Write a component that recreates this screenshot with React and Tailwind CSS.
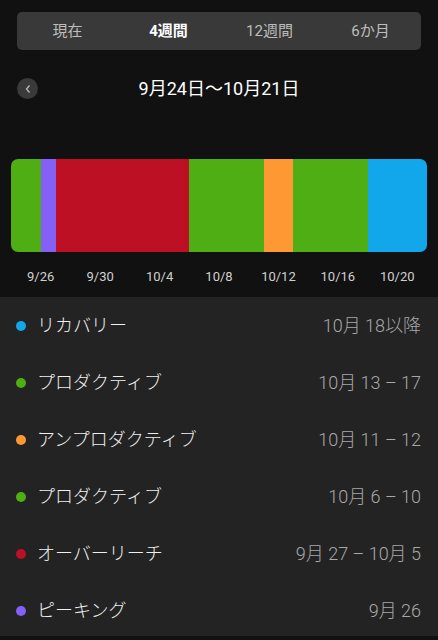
import React from "react";

const segs = [
  { d: 2, c: "bg-[#4fae13]" },
  { d: 1, c: "bg-[#8560f7]" },
  { d: 9, c: "bg-[#bd1024]" },
  { d: 5, c: "bg-[#4fae13]" },
  { d: 2, c: "bg-[#fe9832]" },
  { d: 5, c: "bg-[#4fae13]" },
  { d: 4, c: "bg-[#12a7eb]" },
];

const labels = ["9/26", "9/30", "10/4", "10/8", "10/12", "10/16", "10/20"];

const rows = [
  { c: "bg-[#12a7eb]", name: "リカバリー", val: "10月 18以降" },
  { c: "bg-[#4fae13]", name: "プロダクティブ", val: "10月 13 – 17" },
  { c: "bg-[#fe9832]", name: "アンプロダクティブ", val: "10月 11 – 12" },
  { c: "bg-[#4fae13]", name: "プロダクティブ", val: "10月 6 – 10" },
  { c: "bg-[#bd1024]", name: "オーバーリーチ", val: "9月 27 – 10月 5" },
  { c: "bg-[#8560f7]", name: "ピーキング", val: "9月 26" },
];

export default function App() {
  const font = { fontFamily: 'Roboto, "Noto Sans CJK JP", sans-serif' };
  return (
    <div className="w-[438px] h-[640px] bg-[#111111] overflow-hidden flex flex-col" style={font}>
      <div className="h-[297px] shrink-0 flex flex-col">
        <div className="mt-[12px] mx-[17px] h-[38px] rounded-[5px] bg-[#393939] grid grid-cols-4 items-center text-[15px]">
          <div className="text-center text-[#bdbdbd]">現在</div>
          <div className="text-center text-white font-bold">4週間</div>
          <div className="text-center text-[#bdbdbd]">12週間</div>
          <div className="text-center text-[#bdbdbd]">6か月</div>
        </div>
        <div className="relative mt-[28px] h-[21px] flex items-center justify-center">
          <div className="absolute left-[17px] top-0 w-[21px] h-[21px] rounded-full bg-[#3a3a3a] flex items-center justify-center">
            <svg width="8" height="10" viewBox="0 0 8 10" fill="none">
              <path d="M5.5 1.5 L2.5 5 L5.5 8.5" stroke="#bdbdbd" strokeWidth="1.2" />
            </svg>
          </div>
          <div className="text-white text-[18px] font-normal leading-none">9月24日〜10月21日</div>
        </div>
        <div className="mt-[60px] mx-[11px] h-[93px] rounded-[7px] overflow-hidden flex">
          {segs.map((s, i) => (
            <div key={i} className={s.c} style={{ flexGrow: s.d, flexBasis: 0 }} />
          ))}
        </div>
        <div className="mx-[11px] mt-[15px] grid grid-cols-7 text-[13px] text-[#d0d0d0]">
          {labels.map((l) => (
            <div key={l} className="text-center">{l}</div>
          ))}
        </div>
      </div>
      <div className="h-[339px] shrink-0 bg-[#232323] overflow-hidden flex flex-col">
        {rows.map((r, i) => (
          <div key={i} className="h-[57px] shrink-0 flex items-center pl-[16px] pr-[17px]">
            <div className={`w-[10px] h-[10px] rounded-full ${r.c}`} />
            <div className="ml-[11px] text-[18px] font-light text-[#f0f0f0] flex-1">{r.name}</div>
            <div className="text-[18px] font-light text-[#a8a8a8]">{r.val}</div>
          </div>
        ))}
      </div>
    </div>
  );
}
